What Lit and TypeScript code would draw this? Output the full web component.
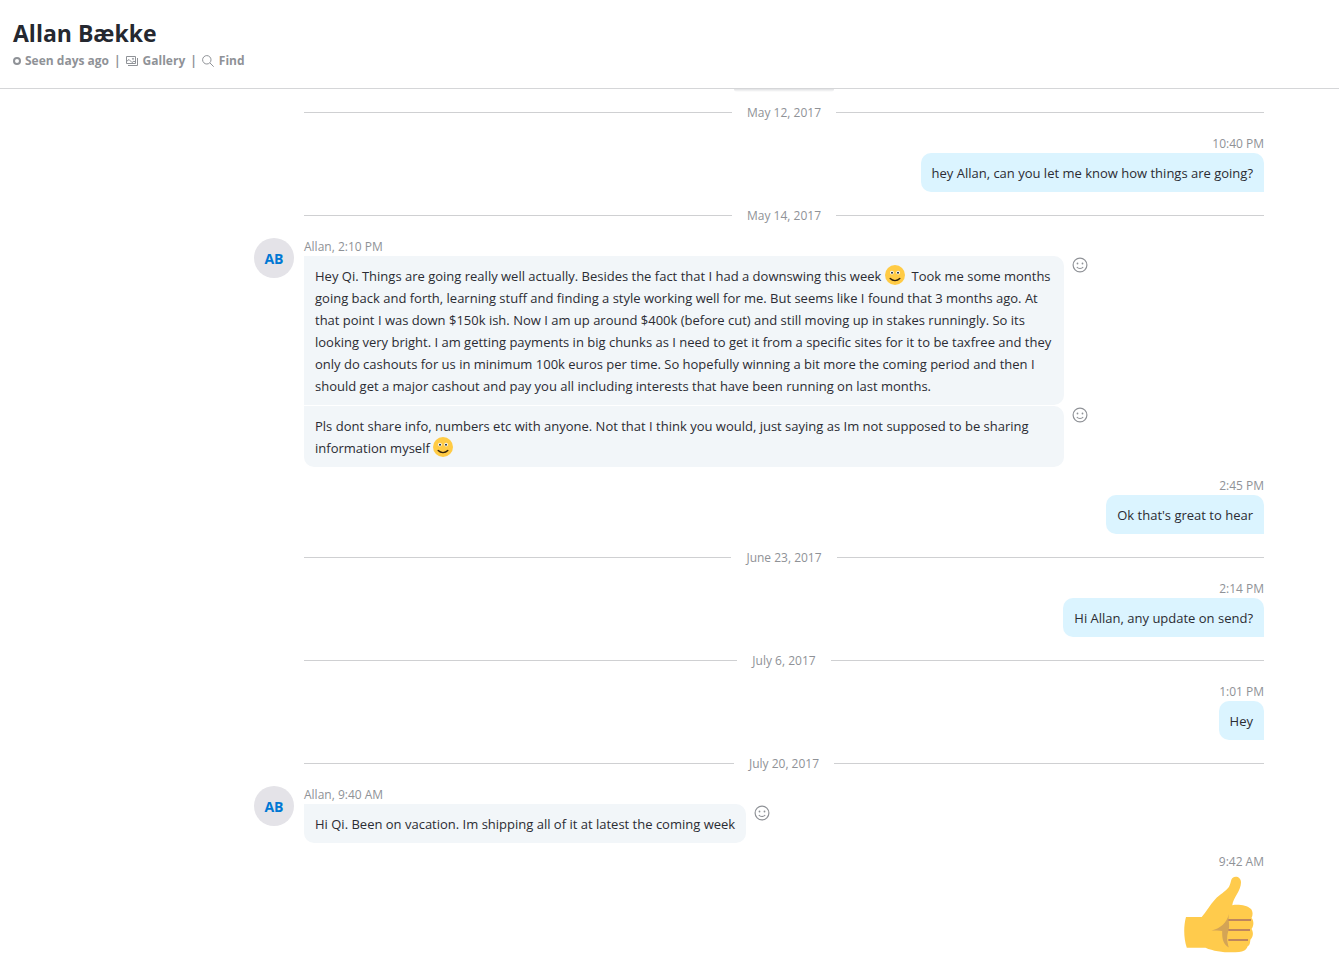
import { LitElement, html, css } from "lit";
import { customElement } from "lit/decorators.js";

const smile = html`<svg class="smile" viewBox="0 0 20 20" role="img" aria-label="smile">
  <circle cx="10" cy="10" r="10" fill="#ffcb45" />
  <ellipse cx="6.9" cy="7.6" rx="1.8" ry="1.9" fill="#fff" />
  <ellipse cx="13.1" cy="7.6" rx="1.8" ry="1.9" fill="#fff" />
  <circle cx="7" cy="7.8" r="1" fill="#1c2b36" />
  <circle cx="13" cy="7.8" r="1" fill="#1c2b36" />
  <path d="M5.2 13.6c2.6 2.7 7 2.7 9.6 0" fill="none" stroke="#33220a" stroke-width="1.4" stroke-linecap="round" />
</svg>`;

type Message = { body: unknown; wide?: boolean };
type Entry =
  | { kind: "date"; text: string }
  | { kind: "mine"; time: string; body: unknown }
  | { kind: "thumb"; time: string }
  | { kind: "theirs"; time: string; messages: Message[] };

const entries: Entry[] = [
  { kind: "date", text: "May 12, 2017" },
  { kind: "mine", time: "10:40 PM", body: "hey Allan, can you let me know how things are going?" },
  { kind: "date", text: "May 14, 2017" },
  {
    kind: "theirs",
    time: "Allan, 2:10 PM",
    messages: [
      {
        wide: true,
        body: html`Hey Qi. Things are going really well actually. Besides the fact that I had a downswing this week ${smile}&nbsp; Took me some months<br />going back and forth, learning stuff and finding a style working well for me. But seems like I found that 3 months ago. At<br />that point I was down $150k ish. Now I am up around $400k (before cut) and still moving up in stakes runningly. So its<br />looking very bright. I am getting payments in big chunks as I need to get it from a specific sites for it to be taxfree and they<br />only do cashouts for us in minimum 100k euros per time. So hopefully winning a bit more the coming period and then I<br />should get a major cashout and pay you all including interests that have been running on last months.`,
      },
      {
        wide: true,
        body: html`Pls dont share info, numbers etc with anyone. Not that I think you would, just saying as Im not supposed to be sharing<br />information myself ${smile}`,
      },
    ],
  },
  { kind: "mine", time: "2:45 PM", body: "Ok that's great to hear" },
  { kind: "date", text: "June 23, 2017" },
  { kind: "mine", time: "2:14 PM", body: "Hi Allan, any update on send?" },
  { kind: "date", text: "July 6, 2017" },
  { kind: "mine", time: "1:01 PM", body: "Hey" },
  { kind: "date", text: "July 20, 2017" },
  {
    kind: "theirs",
    time: "Allan, 9:40 AM",
    messages: [{ body: "Hi Qi. Been on vacation. Im shipping all of it at latest the coming week" }],
  },
  { kind: "thumb", time: "9:42 AM" },
];

@customElement("app-root")
export class AppRoot extends LitElement {
  static styles = css`
    :host {
      display: block;
      min-height: 100vh;
      background: #fff;
      color: #2b2c33;
      font-family: "Open Sans", "Noto Sans", sans-serif;
    }
    button {
      font: inherit;
      color: inherit;
      background: none;
      border: 0;
      padding: 0;
      cursor: pointer;
    }
    svg { display: block; flex: none; }
    .header {
      padding: 17px 13px;
      border-bottom: 1px solid #d5d6d8;
    }
    .name { margin: 0 0 2px; font-size: 23px; line-height: 32px; font-weight: 700; color: #252830; }
    .meta {
      display: flex;
      align-items: center;
      font-size: 12px;
      line-height: 20px;
      font-weight: 700;
      color: #8f9297;
    }
    .status { display: flex; align-items: center; gap: 4px; }
    .bar { margin: 0 5px; }
    .tool { display: flex; align-items: center; gap: 5px; }
    .chat { padding: 0 75px 16px 254px; }
    .peek {
      width: 100px;
      height: 3px;
      margin: 0 auto;
      border-radius: 0 0 10px 10px;
      background: linear-gradient(#e0e1e3, #fff);
    }
    .peekrow { margin-left: 50px; height: 14px; }
    .date {
      display: flex;
      align-items: center;
      gap: 15px;
      margin: 14px 0 13px 50px;
      font-size: 12px;
      line-height: 19px;
      color: #8f9297;
    }
    .peekrow + .date { margin-top: 0; }
    .date::before, .date::after { content: ""; flex: 1; height: 1px; background: #cfd0d2; }
    .time { font-size: 12px; line-height: 18px; color: #8f9297; }
    .mine { display: flex; flex-direction: column; align-items: flex-end; }
    .theirs { display: flex; gap: 10px; }
    .theirs + .mine { margin-top: 10px; }
    .avatar {
      display: grid;
      place-items: center;
      flex: none;
      width: 40px;
      height: 40px;
      border-radius: 50%;
      background: #e4e3e8;
      color: #0078d4;
      font-size: 14px;
      font-weight: 700;
    }
    .group { display: flex; flex-direction: column; flex: 1; min-width: 0; }
    .line { display: flex; align-items: flex-start; gap: 8px; }
    .line + .line { margin-top: 1px; }
    .bubble {
      box-sizing: border-box;
      padding: 9px 11px 8px;
      font-size: 13px;
      line-height: 22px;
    }
    .mine .bubble { background: #dbf4ff; border-radius: 10px 10px 0 10px; }
    .theirs .bubble { background: #f2f6f9; border-radius: 0 10px 10px 0; }
    .line:last-child .bubble { border-bottom-left-radius: 10px; }
    .wide { width: 760px; }
    .smile { display: inline-block; width: 20px; height: 20px; margin: -4px 0; vertical-align: 0; }
    .react { margin-top: 1px; color: #8f9297; }
    .thumb { margin-top: 3px; }
  `;

  private bubbleLine(m: Message) {
    return html`<div class="line">
      <div class="bubble ${m.wide ? "wide" : ""}">${m.body}</div>
      <button class="react" aria-label="React">
        <svg width="16" height="16" viewBox="0 0 16 16" fill="none" stroke="currentColor">
          <circle cx="8" cy="8" r="6.9" stroke-width="1.2" />
          <circle cx="5.5" cy="6.5" r=".9" fill="currentColor" stroke="none" />
          <circle cx="10.5" cy="6.5" r=".9" fill="currentColor" stroke="none" />
          <path d="M4.8 10c1.6 2 4.8 2 6.4 0" stroke-width="1.2" />
        </svg>
      </button>
    </div>`;
  }

  private thumb() {
    return html`<svg class="thumb" width="80" height="80" viewBox="0 0 80 80" role="img" aria-label="thumbs up">
      <path d="M2 43H17.700C22 38 26 31 31 25.500C36 20 41 18 44.500 13.500C47 10 46.500 6 48.500 4C51.500 1.500 57 3 57 8.500C57 17 49 24 48.300 31.200C55 30.200 63 31.500 67 35C69 37.500 69 41 67.500 44C70 46.500 70 52 67.500 55C69.500 58 69.500 63 66.500 65.500C66 67 66.500 71 63.500 72.500C62.500 76 59 77.500 55 78C45 79 31 78 21.500 73.700H2.800C-.5 64-.5 52 2 43z" fill="#ffcb4c" />
      <path d="M45 40C43.500 47 46.500 50 44.300 57C42.500 63 43 67 44.800 73.500C38.500 70 38 63 38.200 57C35 56.500 31 56.800 27.500 56.500C37 54 42.500 49 45 40z" fill="#d4a456" />
      <path d="M44.300 46H67M44.300 56H66M44.300 66H64" stroke="#bf865c" stroke-width="2" fill="none" />
    </svg>`;
  }

  private entry(e: Entry) {
    switch (e.kind) {
      case "date":
        return html`<div class="date">${e.text}</div>`;
      case "mine":
        return html`<div class="mine"><div class="time">${e.time}</div><div class="bubble">${e.body}</div></div>`;
      case "thumb":
        return html`<div class="mine"><div class="time">${e.time}</div>${this.thumb()}</div>`;
      case "theirs":
        return html`<div class="theirs">
          <div class="avatar">AB</div>
          <div class="group"><div class="time">${e.time}</div>${e.messages.map((m) => this.bubbleLine(m))}</div>
        </div>`;
    }
  }

  render() {
    return html`
      <header class="header">
        <h1 class="name">Allan Bække</h1>
        <div class="meta">
          <span class="status">
            <svg width="8" height="8" viewBox="0 0 8 8"><circle cx="4" cy="4" r="3" fill="none" stroke="#8f9297" stroke-width="2" /></svg>
            Seen days ago
          </span>
          <span class="bar">|</span>
          <button class="tool">
            <svg width="12" height="10" viewBox="0 0 12 10" fill="none" stroke="#8f9297">
              <path d="M.5.5h9v7h-9zM2 9.500h9.500V2M.5 5.500l2.500-2 3 3 2-1.500 1.500 1.500" />
              <circle cx="7" cy="2.800" r=".6" />
            </svg>
            Gallery
          </button>
          <span class="bar">|</span>
          <button class="tool">
            <svg width="12" height="12" viewBox="0 0 12 12" fill="none" stroke="#8f9297">
              <circle cx="4.800" cy="4.800" r="4.200" /><path d="M8 8l3.700 3.700" />
            </svg>
            Find
          </button>
        </div>
      </header>
      <main class="chat">
        <div class="peekrow"><div class="peek"></div></div>
        ${entries.map((e) => this.entry(e))}
      </main>
    `;
  }
}
